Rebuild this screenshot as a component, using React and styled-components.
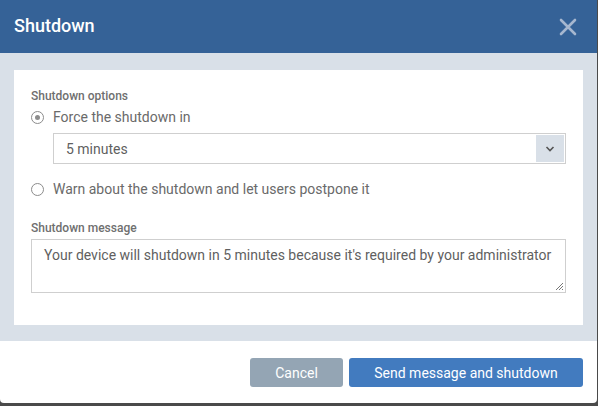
import React from "react";
import styled, { createGlobalStyle } from "styled-components";

const GlobalStyle = createGlobalStyle`
  html, body {
    margin: 0;
    padding: 0;
    background: #4a4a4a;
    font-family: Roboto, "Liberation Sans", sans-serif;
  }
`;

const Dialog = styled.div`
  width: 597px;
  height: 403px;
  background: #fff;
  border-radius: 0 0 4px 4px;
  overflow: hidden;
  display: flex;
  flex-direction: column;
`;

const Header = styled.header`
  height: 53px;
  flex: none;
  background: #356297;
  display: flex;
  align-items: center;
  justify-content: space-between;
  padding: 0 20px 0 14px;
  box-sizing: border-box;
`;

const Title = styled.h1`
  margin: 0 0 3px;
  font-size: 18px;
  font-weight: 500;
  color: #fff;
`;

const CloseButton = styled.button`
  border: 0;
  background: none;
  padding: 0;
  display: flex;
  cursor: pointer;
`;

const Body = styled.div`
  background: #d9e0e8;
  padding: 17px 14px 16px;
  height: 288px;
  box-sizing: border-box;
`;

const Card = styled.div`
  background: #fff;
  height: 255px;
  box-sizing: border-box;
  padding: 19px 17px 0;
  display: flex;
  flex-direction: column;
`;

const Label = styled.div`
  font-size: 12px;
  font-weight: 500;
  color: #6f6f6f;
  line-height: 14px;
  margin-top: ${(p) => p.$top || 0}px;
`;

const RadioRow = styled.label`
  display: flex;
  align-items: center;
  gap: 9px;
  font-size: 14px;
  color: #6a6a6a;
  line-height: 16px;
  margin-top: ${(p) => p.$top || 0}px;
`;

const RadioDot = styled.span`
  width: 13px;
  height: 13px;
  border-radius: 50%;
  border: 1.5px solid #8c8c8c;
  box-sizing: border-box;
  display: flex;
  align-items: center;
  justify-content: center;
  &::after {
    content: "";
    width: 5px;
    height: 5px;
    border-radius: 50%;
    background: ${(p) => (p.$checked ? "#8c8c8c" : "transparent")};
  }
`;

const Select = styled.div`
  margin: 8px 0 0 22px;
  height: 31px;
  border: 1px solid #cfcfcf;
  box-sizing: border-box;
  display: flex;
  align-items: center;
  justify-content: space-between;
  padding: 1px 1px 1px 12px;
  font-size: 14px;
  color: #5f5f5f;
`;

const SelectArrow = styled.span`
  width: 28px;
  height: 27px;
  background: #d9e0e8;
  display: flex;
  align-items: center;
  justify-content: center;
`;

const TextArea = styled.div`
  margin-top: 4px;
  height: 54px;
  border: 1px solid #cfcfcf;
  box-sizing: border-box;
  padding: 7px 12px;
  font-size: 14px;
  line-height: 16px;
  color: #5f5f5f;
  position: relative;
`;

const Grip = styled.svg`
  position: absolute;
  right: 1px;
  bottom: 1px;
`;

const Footer = styled.footer`
  flex: 1;
  display: flex;
  justify-content: flex-end;
  align-items: flex-start;
  gap: 6px;
  padding: 17px 14px 0;
`;

const Button = styled.button`
  height: 29px;
  border: 0;
  border-radius: 3px;
  background: ${(p) => (p.$primary ? "#427bbf" : "#94a5b4")};
  color: #fff;
  font-family: Roboto, "Liberation Sans", sans-serif;
  font-size: 14px;
  width: ${(p) => p.$width}px;
  cursor: pointer;
`;

export default function App() {
  return (
    <>
      <GlobalStyle />
      <Dialog>
        <Header>
          <Title>Shutdown</Title>
          <CloseButton aria-label="Close">
            <svg width="18" height="18" viewBox="0 0 18 18">
              <path
                d="M2 2L16 16M16 2L2 16"
                stroke="#a6b7cf"
                strokeWidth="2.6"
                strokeLinecap="round"
              />
            </svg>
          </CloseButton>
        </Header>
        <Body>
          <Card>
            <Label>Shutdown options</Label>
            <RadioRow $top={6}>
              <RadioDot $checked />
              Force the shutdown in
            </RadioRow>
            <Select>
              5 minutes
              <SelectArrow>
                <svg width="10" height="6" viewBox="0 0 10 6">
                  <path
                    d="M1.5 1L5 4.5L8.5 1"
                    stroke="#555"
                    strokeWidth="1.6"
                    fill="none"
                  />
                </svg>
              </SelectArrow>
            </Select>
            <RadioRow $top={17}>
              <RadioDot />
              Warn about the shutdown and let users postpone it
            </RadioRow>
            <Label $top={24}>Shutdown message</Label>
            <TextArea>
              Your device will shutdown in 5 minutes because it's required by
              your administrator
              <Grip width="9" height="9" viewBox="0 0 9 9">
                <path d="M8 1L1 8M8 4L4 8M8 7L7 8" stroke="#777" strokeWidth="1" />
              </Grip>
            </TextArea>
          </Card>
        </Body>
        <Footer>
          <Button $width={93}>Cancel</Button>
          <Button $primary $width={234}>
            Send message and shutdown
          </Button>
        </Footer>
      </Dialog>
    </>
  );
}
